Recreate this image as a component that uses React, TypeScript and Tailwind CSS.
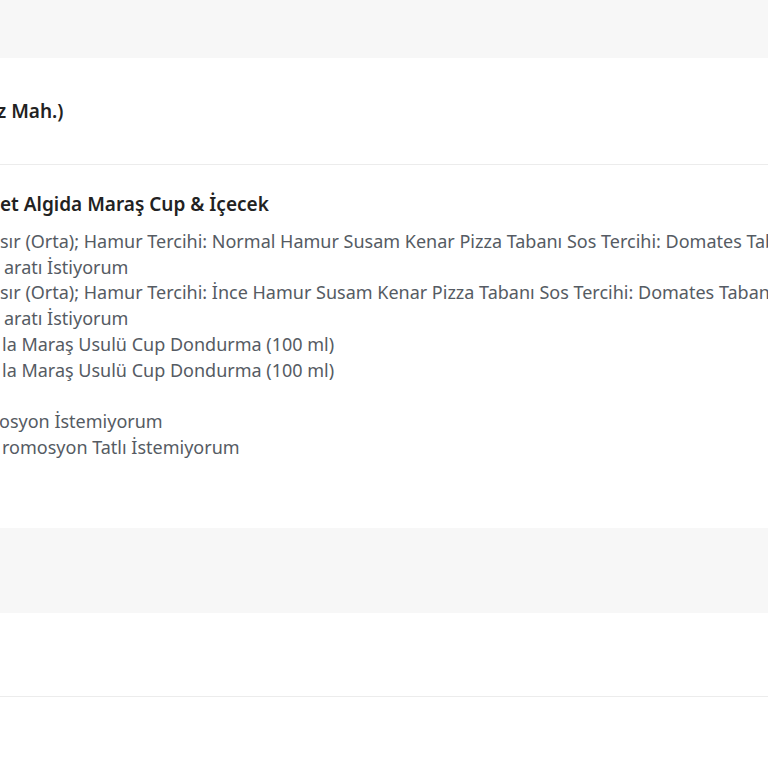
export default function App() {
  const lines: [string, string][] = [
    ['ml-0', 'sır (Orta); Hamur Tercihi: Normal Hamur Susam Kenar Pizza Tabanı Sos Tercihi: Domates Tabanı'],
    ['ml-[4px]', 'aratı İstiyorum'],
    ['ml-0', 'sır (Orta); Hamur Tercihi: İnce Hamur Susam Kenar Pizza Tabanı Sos Tercihi: Domates Tabanı'],
    ['ml-[4px]', 'aratı İstiyorum'],
    ['ml-[2px]', 'la Maraş Usulü Cup Dondurma (100 ml)'],
    ['ml-[2px]', 'la Maraş Usulü Cup Dondurma (100 ml)'],
    ['ml-0', '\u00a0'],
    ['ml-[-1px]', 'osyon İstemiyorum'],
    ['ml-[2px]', 'romosyon Tatlı İstemiyorum'],
  ];
  return (
    <div className="w-[768px] h-[768px] overflow-hidden bg-white font-['Open_Sans',sans-serif]">
      <div className="h-[58px] bg-[#f7f7f7]" />
      <div className="h-[107px] flex items-center border-b border-[#ececec]">
        <span className="ml-[-3px] text-[19px] font-semibold text-[#222]">z Mah.)</span>
      </div>
      <div className="h-[363px] pt-[25px]">
        <div className="text-[19px] font-semibold text-[#222] leading-[28px] whitespace-nowrap">et Algida Maraş Cup &amp; İçecek</div>
        <div className="mt-[11px] text-[18px] leading-[25.7px] text-[#555b63] whitespace-nowrap">
          {lines.map(([m, t], i) => (
            <div key={i} className={m}>{t}</div>
          ))}
        </div>
      </div>
      <div className="h-[85px] bg-[#f7f7f7]" />
      <div className="h-[84px] border-b border-[#ececec]" />
    </div>
  );
}
